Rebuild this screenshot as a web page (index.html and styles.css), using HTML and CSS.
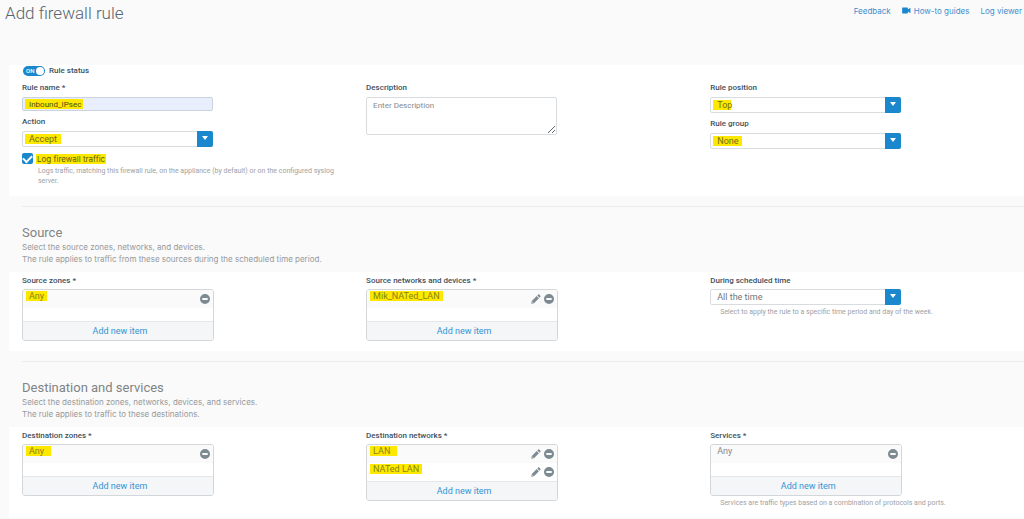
FILE: index.html
```html
<!DOCTYPE html>
<html lang="en">
<head>
<meta charset="utf-8">
<title>Add firewall rule</title>
<link rel="stylesheet" href="styles.css">
</head>
<body>
<svg class="defs" aria-hidden="true">
  <symbol id="pencil" viewBox="0 0 10 10"><path d="M7.200 0.600Q7.700 0.100 8.200 0.600L9.400 1.800Q9.900 2.300 9.400 2.800L8.500 3.700L6.300 1.500ZM5.700 2.100L7.900 4.300L3 9.200L0.200 9.800L0.800 7ZM1.500 7.500L1.300 8.700L2.500 8.500Z" fill-rule="evenodd"/></symbol>
  <symbol id="minus" viewBox="0 0 10 10"><path fill-rule="evenodd" d="M5 0a5 5 0 1 1 0 10A5 5 0 0 1 5 0zM2.300 4v2h5.400V4z"/></symbol>
</svg>
<header class="page-header">
  <h1 class="page-title">Add firewall rule</h1>
  <nav class="links">
    <a href="#feedback">Feedback</a>
    <a href="#guides"><svg class="camera" viewBox="0 0 10 8" aria-hidden="true"><path d="M0 1.500Q0 .7.8.7h5q.8 0 .8.8v1.300L9.500.8v6.400L6.600 5.200v1.300q0 .8-.8.8h-5Q0 7.300 0 6.500z"/></svg>How-to guides</a>
    <a href="#logs">Log viewer</a>
  </nav>
</header>
<main class="content">
  <section class="panel panel-general">
    <label class="status"><input class="switch-input" type="checkbox" role="switch" checked><span class="switch"><span class="switch-text">ON</span><span class="knob"></span></span>Rule status</label>
    <div class="columns">
      <div class="stack">
        <div class="field">
          <label for="name">Rule name *</label>
          <input class="control text-input marked mark-name" id="name" type="text" value="Inbound_IPsec">
        </div>
        <div class="field">
          <label for="action">Action</label>
          <div class="select"><select class="control marked mark-action" id="action"><option>Accept</option></select><span class="arrow"></span></div>
        </div>
        <div class="log">
          <label class="check"><input type="checkbox" checked><mark>Log firewall traffic</mark></label>
          <p class="hint log-hint">Logs traffic, matching this firewall rule, on the appliance (by default) or on the configured syslog server.</p>
        </div>
      </div>
      <div class="field">
        <label for="description">Description</label>
        <textarea class="control" id="description" placeholder="Enter Description"></textarea>
      </div>
      <div class="stack">
        <div class="field">
          <label for="position">Rule position</label>
          <div class="select"><select class="control marked mark-top" id="position"><option>Top</option></select><span class="arrow"></span></div>
        </div>
        <div class="field">
          <label for="group">Rule group</label>
          <div class="select"><select class="control marked mark-none" id="group"><option>None</option></select><span class="arrow"></span></div>
        </div>
      </div>
    </div>
  </section>

  <div class="intro">
    <h2>Source</h2>
    <p>Select the source zones, networks, and devices.<br>The rule applies to traffic from these sources during the scheduled time period.</p>
  </div>
  <section class="panel">
    <div class="columns">
      <div class="field">
        <h3>Source zones *</h3>
        <div class="picker">
          <ul><li><mark>Any</mark><button class="icon" aria-label="Remove Any"><svg><use href="#minus"/></svg></button></li></ul>
          <button class="add">Add new item</button>
        </div>
      </div>
      <div class="field">
        <h3>Source networks and devices *</h3>
        <div class="picker">
          <ul><li><mark>Mik_NATed_LAN</mark><button class="icon" aria-label="Edit Mik_NATed_LAN"><svg><use href="#pencil"/></svg></button><button class="icon" aria-label="Remove Mik_NATed_LAN"><svg><use href="#minus"/></svg></button></li></ul>
          <button class="add">Add new item</button>
        </div>
      </div>
      <div class="field">
        <label for="schedule">During scheduled time</label>
        <div class="select"><select class="control" id="schedule"><option>All the time</option></select><span class="arrow"></span></div>
        <p class="hint">Select to apply the rule to a specific time period and day of the week.</p>
      </div>
    </div>
  </section>

  <div class="intro">
    <h2>Destination and services</h2>
    <p>Select the destination zones, networks, devices, and services.<br>The rule applies to traffic to these destinations.</p>
  </div>
  <section class="panel">
    <div class="columns">
      <div class="field">
        <h3>Destination zones *</h3>
        <div class="picker">
          <ul><li><mark class="wide">Any</mark><button class="icon" aria-label="Remove Any"><svg><use href="#minus"/></svg></button></li></ul>
          <button class="add">Add new item</button>
        </div>
      </div>
      <div class="field">
        <h3>Destination networks *</h3>
        <div class="picker">
          <ul>
            <li><mark class="wide">LAN</mark><button class="icon" aria-label="Edit LAN"><svg><use href="#pencil"/></svg></button><button class="icon" aria-label="Remove LAN"><svg><use href="#minus"/></svg></button></li>
            <li><mark>NATed LAN</mark><button class="icon" aria-label="Edit NATed LAN"><svg><use href="#pencil"/></svg></button><button class="icon" aria-label="Remove NATed LAN"><svg><use href="#minus"/></svg></button></li>
          </ul>
          <button class="add">Add new item</button>
        </div>
      </div>
      <div class="field">
        <h3>Services *</h3>
        <div class="picker">
          <ul><li><span class="plain">Any</span><button class="icon" aria-label="Remove Any"><svg><use href="#minus"/></svg></button></li></ul>
          <button class="add">Add new item</button>
        </div>
        <p class="hint">Services are traffic types based on a combination of protocols and ports.</p>
      </div>
    </div>
  </section>
</main>
</body>
</html>
```
FILE: styles.css
```css
* { box-sizing: border-box; }
body, h1, h2, h3, p, ul { margin: 0; padding: 0; }
body {
  background: #fafafa;
  color: #3d505e;
  font: 8px/12px Roboto, "Liberation Sans", sans-serif;
}
button, input, select, textarea { font: inherit; margin: 0; }
.defs { display: none; }

.page-header {
  display: flex;
  justify-content: space-between;
  align-items: flex-start;
  min-height: 65px;
  padding: 2px 2px 0 5px;
}
.page-title { color: #58656f; font-size: 17px; font-weight: 300; line-height: 22px; }
.links { display: flex; gap: 11px; padding-top: 2px; font-family: Inter, sans-serif; font-size: 8px; line-height: 14px; }
.links a { color: #3d8fce; text-decoration: none; white-space: nowrap; }
.camera { width: 9px; height: 7px; margin-right: 3px; fill: #1b87cc; }

.content { padding-left: 9px; }
.panel { background: #fff; padding: 3px 0 10px 13px; }
.panel-general { padding-top: 0; }
.columns { display: grid; grid-template-columns: 34fr 34fr 31fr; align-items: start; }
.stack { display: grid; gap: 5px; }
.field label, h3 {
  display: block;
  margin-bottom: 2px;
  font-size: 8px;
  font-weight: 500;
  line-height: 12px;
}
.panel-general .field label { margin-bottom: 3px; }

.status {
  display: flex;
  align-items: center;
  gap: 4px;
  height: 12px;
  margin: 0 0 5px 1px;
  font-weight: 500;
}
.switch-input { position: absolute; opacity: 0; }
.switch {
  display: flex;
  align-items: center;
  justify-content: space-between;
  width: 22px;
  height: 10px;
  padding: 0 1px 0 3px;
  border-radius: 5px;
  background: #1b87cc;
  color: #fff;
}
.switch-text { font-size: 6px; line-height: 10px; }
.knob { width: 8px; height: 8px; border-radius: 50%; background: #fff; }

.control {
  display: block;
  width: 191px;
  height: 16px;
  padding: 0 6px;
  border: 1px solid #d9dcdf;
  border-radius: 2px;
  background-color: #fff;
  color: #6f767b;
  font-size: 9px;
  line-height: 14px;
}
select.control { appearance: none; }
.control.text-input { height: 14px; background-color: #e8eefc; border-color: #cbd3e1; font-size: 8px; line-height: 12px; }
textarea.control { height: 38px; padding-top: 2px; font-size: 8px; line-height: 12px; }
textarea::placeholder { color: #858a8e; }
.control.marked {
  color: #6f6f10;
  background-image: linear-gradient(#ffe800, #ffe800);
  background-repeat: no-repeat;
  background-position: 2px center;
}
.control.mark-name { color: #4c4d18; background-size: 58px 10px; }
.mark-action { background-size: 36px 10px; }
.mark-top { background-size: 18px 10px; }
.mark-none { background-size: 29px 10px; }

.select { display: grid; width: 191px; }
.select > * { grid-area: 1 / 1; }
.arrow {
  display: grid;
  place-items: center;
  justify-self: end;
  width: 16px;
  border-radius: 0 2px 2px 0;
  background: #1b87cc;
  pointer-events: none;
}
.arrow::after {
  content: "";
  margin-bottom: 2px;
  border: 3px solid transparent;
  border-top: 4px solid #fff;
  border-bottom: 0;
}

.check { display: flex; align-items: center; gap: 3px; }
.check input {
  appearance: none;
  width: 11px;
  height: 11px;
  border-radius: 2px;
  background: #1b87cc;
  display: grid;
  place-items: center;
}
.check input:checked::after {
  content: "";
  width: 7px;
  height: 4px;
  margin-bottom: 2px;
  border: solid #fff;
  border-width: 0 0 2px 2px;
  transform: rotate(-45deg);
}
.check mark { font-family: Inter, sans-serif; font-size: 8px; line-height: 10px; padding: 0 1px; }
mark { background: #ffe800; color: #5c5b10; }
.log { padding-top: 1px; }
.hint { margin: 2px 0 0 10px; color: #9da1a4; font-size: 7px; line-height: 10px; }
.log-hint { max-width: 316px; margin-left: 16px; }

.intro {
  margin: 10px 0 0 13px;
  padding: 18px 0 7px;
  border-top: 1px solid #ececec;
  color: #96999b;
  font-family: Inter, sans-serif;
}
h2 { color: #7f8486; font: 400 13px/16px Roboto, "Liberation Sans", sans-serif; }

.picker {
  width: 192px;
  border: 1px solid #d3d7da;
  border-radius: 3px;
  overflow: hidden;
}
.picker ul { min-height: 31px; list-style: none; }
.picker li {
  display: flex;
  align-items: center;
  gap: 3px;
  height: 18px;
  padding: 0 3px;
  font-size: 9px;
  line-height: 10px;
}
.picker li:nth-child(odd) { background: #fafafa; }
.picker mark, .plain { align-self: flex-start; margin: 1px auto 0 0; padding: 0 3px; }
.picker mark { color: #85850f; }
.picker mark.wide { padding-right: 7px; }
.plain { color: #84898c; }
.icon { width: 10px; height: 10px; padding: 0; border: 0; background: none; }
.icon svg { display: block; width: 10px; height: 10px; fill: #7c8a92; }
.add {
  display: block;
  width: 100%;
  height: 19px;
  padding: 0 0 0 4px;
  border: 0;
  border-top: 1px solid #e5e8ea;
  background: #f4f6f8;
  color: #3295d3;
  font-size: 9px;
  line-height: 18px;
}
```
